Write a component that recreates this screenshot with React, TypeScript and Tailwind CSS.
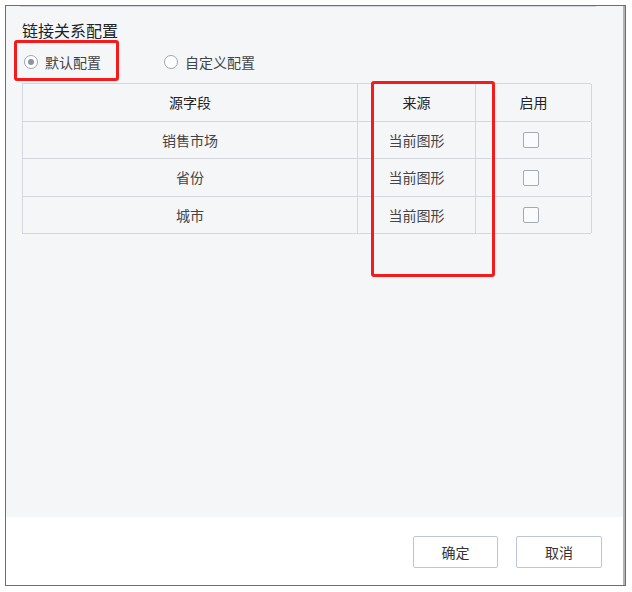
import React from "react";

function Radio({ checked, label }: { checked: boolean; label: string }) {
  return (
    <div className="flex items-center">
      <span className="w-[14px] h-[14px] rounded-full border border-[#9ea4b4] bg-white flex items-center justify-center">
        {checked && <span className="w-[6px] h-[6px] rounded-full bg-[#8d93a3]" />}
      </span>
      <span className="ml-[7px] text-[14px] leading-5 text-[#444]">{label}</span>
    </div>
  );
}

function Checkbox() {
  return <span className="block w-[16px] h-[16px] rounded-[2px] border border-[#a3a9b9] bg-[#fafbfc]" />;
}

const rows = [
  { name: "销售市场", h: "h-[37px]" },
  { name: "省份", h: "h-[38px]" },
  { name: "城市", h: "h-[37px]" },
];

export default function App() {
  return (
    <div className="w-[632px] h-[592px] bg-white pt-[5px] pl-[5px] font-['Noto_Sans_CJK_SC','Noto_Sans',sans-serif] relative">
      <div className="w-[621px] h-[581px] border border-[#4472c4] flex">
        <div className="flex-1 flex flex-col">
          <div className="h-[511px] bg-[#f5f6f8] flex flex-col">
            <div className="h-px ml-[14px] w-[576px] bg-[#d3d6dc]" />
            <div className="pl-[16px]">
              <div className="mt-[13px] h-5 flex items-center text-[16px] text-[#222]">链接关系配置</div>
              <div className="h-[43px] flex items-center pl-[2px]">
                <Radio checked label="默认配置" />
                <div className="ml-[63px]">
                  <Radio checked={false} label="自定义配置" />
                </div>
              </div>
              <div className="w-[569px] border-t border-l border-[#d4d7dd] text-[14px]">
                <div className="grid grid-cols-[335px_118px_116px] h-[38px] border-b border-[#d4d7dd] text-[#222]">
                  <div className="flex items-center justify-center border-r border-[#d4d7dd]">源字段</div>
                  <div className="flex items-center justify-center border-r border-[#d4d7dd]">来源</div>
                  <div className="flex items-center justify-center border-r border-[#d4d7dd]">启用</div>
                </div>
                {rows.map((r) => (
                  <div key={r.name} className={`grid grid-cols-[335px_118px_116px] ${r.h} border-b border-[#d4d7dd] text-[#444]`}>
                    <div className="flex items-center justify-center border-r border-[#d4d7dd]">{r.name}</div>
                    <div className="flex items-center justify-center border-r border-[#d4d7dd]">当前图形</div>
                    <div className="flex items-center justify-center border-r border-[#d4d7dd] pr-[6px]">
                      <Checkbox />
                    </div>
                  </div>
                ))}
              </div>
            </div>
          </div>
          <div className="flex-1 bg-white flex justify-end items-start pt-[19px] pr-[21px] gap-[18px]">
            <button className="w-[85px] h-[32px] rounded-[2px] border border-[#bcc6d6] bg-white text-[14px] text-[#333]">确定</button>
            <button className="w-[86px] h-[32px] rounded-[2px] border border-[#bcc6d6] bg-white text-[14px] text-[#333]">取消</button>
          </div>
        </div>
        <div className="w-[2px] bg-[#b3b3b3]" />
      </div>
      <div className="absolute left-[14px] top-[40px] w-[105px] h-[41px] border-[3px] border-[#f51b1b] rounded-[3px]" />
      <div className="absolute left-[371px] top-[81px] w-[124px] h-[196px] border-[3px] border-[#f51b1b] rounded-[3px]" />
    </div>
  );
}
